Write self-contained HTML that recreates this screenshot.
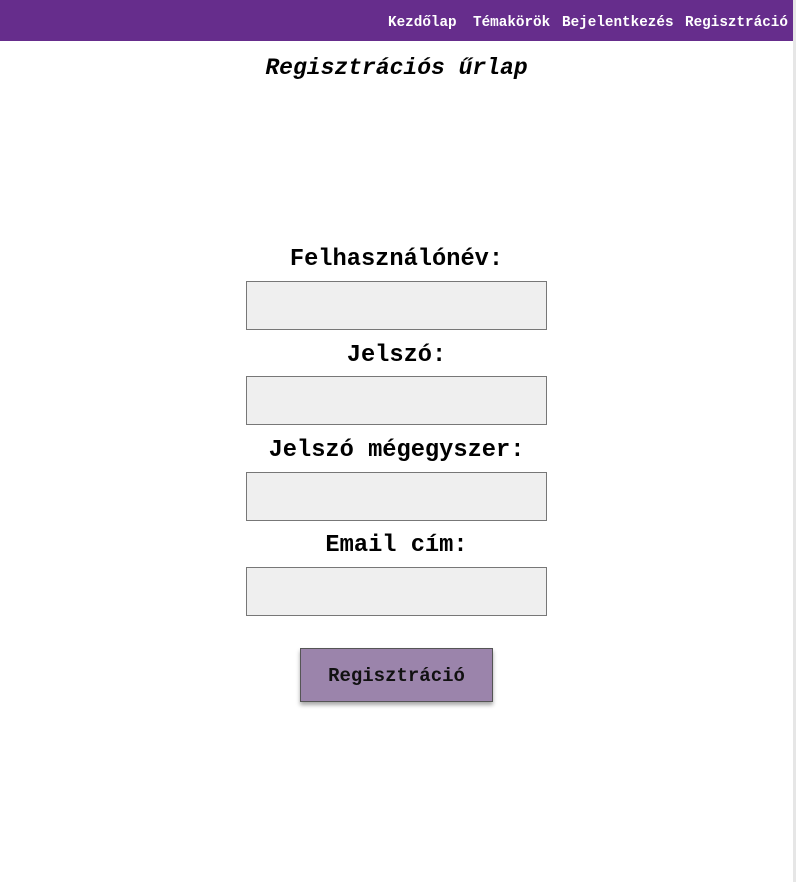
<!DOCTYPE html>
<html><head><meta charset="utf-8"><style>
*{margin:0;padding:0;box-sizing:border-box}
body{width:796px;height:882px;background:#fff;font-family:"Liberation Mono","DejaVu Sans Mono",monospace;position:relative;overflow:hidden}
.rb{position:absolute;right:0;top:0;width:3px;height:882px;background:#e6e6e6}
nav{position:absolute;left:0;top:0;width:793px;height:41px;background:#662d8c}
nav span{position:absolute;top:14px;color:#fff;font-weight:bold;font-size:14.3px;line-height:18px}
h1{position:absolute;top:53px;left:0;width:793px;text-align:center;font-style:italic;font-weight:bold;font-size:23px;line-height:30px}
.l{position:absolute;left:0;width:793px;text-align:center;font-weight:bold;font-size:23.7px;line-height:30px}
.i{position:absolute;left:246px;width:301px;height:49px;background:#efefef;border:1px solid #777}
.b{position:absolute;left:300px;top:648px;width:193px;height:54px;background:#9b84ab;border:1px solid #555;box-shadow:0 3px 4px rgba(0,0,0,.35);text-align:center;line-height:54px;font-weight:bold;font-size:19px;color:#111}
</style></head><body>
<div class="rb"></div>
<nav><span style="left:388px">Kezdőlap</span><span style="left:473px">Témakörök</span><span style="left:562px">Bejelentkezés</span><span style="left:685px">Regisztráció</span></nav>
<h1>Regisztrációs űrlap</h1>
<div class="l" style="top:245px">Felhasználónév:</div><div class="i" style="top:281px"></div>
<div class="l" style="top:341px">Jelszó:</div><div class="i" style="top:376px"></div>
<div class="l" style="top:436px">Jelszó mégegyszer:</div><div class="i" style="top:472px"></div>
<div class="l" style="top:531px">Email cím:</div><div class="i" style="top:567px"></div>
<div class="b">Regisztráció</div>
</body></html>
